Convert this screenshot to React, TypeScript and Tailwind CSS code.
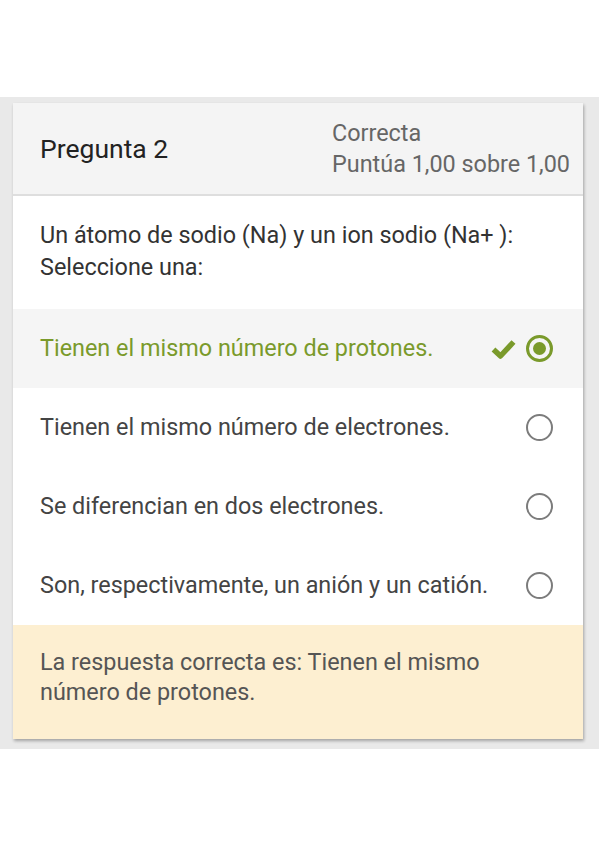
import React from "react";

interface Option {
  text: string;
  selected?: boolean;
  correct?: boolean;
}

const options: Option[] = [
  { text: "Tienen el mismo número de protones.", selected: true, correct: true },
  { text: "Tienen el mismo número de electrones." },
  { text: "Se diferencian en dos electrones." },
  { text: "Son, respectivamente, un anión y un catión." },
];

const Radio = ({ selected }: { selected?: boolean }) =>
  selected ? (
    <span className="flex h-[27px] w-[27px] items-center justify-center rounded-full border-[3px] border-[#7a9a2b]">
      <span className="h-[13px] w-[13px] rounded-full bg-[#7a9a2b]" />
    </span>
  ) : (
    <span className="h-[27px] w-[27px] rounded-full border-[2.5px] border-[#7c7c7c]" />
  );

const Check = () => (
  <svg width="25" height="20" viewBox="0 0 25 20">
    <path
      d="M2.5 10.5 L9.5 17 L22.5 3"
      fill="none"
      stroke="#7a9a2b"
      strokeWidth="5.5"
      strokeLinejoin="round"
    />
  </svg>
);

export default function App() {
  return (
    <div className="bg-white pb-[98px] font-['Roboto',sans-serif]">
      <div className="mt-[97px] bg-[#e9e9e9] pb-[10px] pt-[6px]">
        <div className="ml-[13px] w-[570px] bg-white shadow-[1px_2px_3px_rgba(0,0,0,0.3)]">
          <div className="flex h-[93px] items-center justify-between border-b-2 border-[#dedede] bg-[#f4f4f4] pl-[27px] pr-[13px]">
            <h2 className="text-[26.5px] text-[#222]">Pregunta 2</h2>
            <div className="text-[23.4px] leading-[31px] text-[#666]">
              <div>Correcta</div>
              <div>Puntúa 1,00 sobre 1,00</div>
            </div>
          </div>

          <div className="px-[27px] pb-[26px] pt-[23px] text-[23.4px] leading-[32px] text-[#333]">
            <p>Un átomo de sodio (Na) y un ion sodio (Na+ ):</p>
            <p>Seleccione una:</p>
          </div>

          {options.map((o) => (
            <div
              key={o.text}
              className={`flex h-[79px] items-center justify-between pl-[27px] pr-[30px] text-[23.4px] ${
                o.correct ? "bg-[#f5f5f5] text-[#7a9a2b]" : "text-[#444]"
              }`}
            >
              <span>{o.text}</span>
              <span className="flex items-center gap-[10px]">
                {o.correct && <Check />}
                <Radio selected={o.selected} />
              </span>
            </div>
          ))}

          <div className="h-[114px] bg-[#fdefd1] px-[27px] pt-[22px] text-[23.4px] leading-[30px] text-[#555]">
            La respuesta correcta es: Tienen el mismo
            <br />
            número de protones.
          </div>
        </div>
      </div>
    </div>
  );
}
